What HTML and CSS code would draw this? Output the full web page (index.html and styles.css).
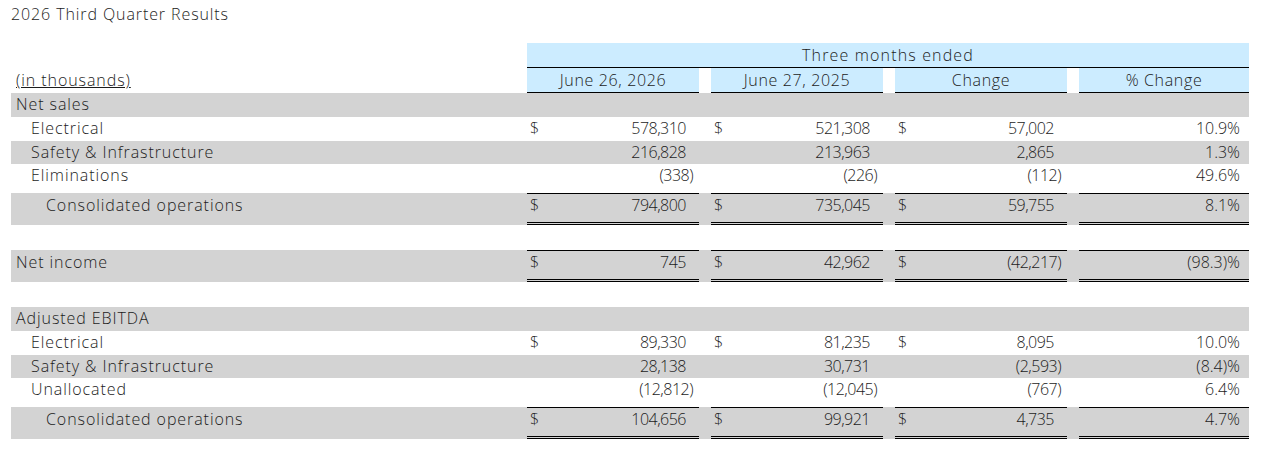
FILE: index.html
```html
<!DOCTYPE html>
<html lang="en">
<head>
<meta charset="utf-8">
<title>2026 Third Quarter Results</title>
<link rel="stylesheet" href="styles.css">
</head>
<body>
<div class="report">
  <h1 class="title">2026 Third Quarter Results</h1>
  <div class="table">
    <div class="row head1">
      <div class="label"></div>
      <div class="span-head">Three months ended</div>
    </div>
    <div class="row head2">
      <div class="label"><span class="units">(in thousands)</span></div>
      <div class="colhead">June 26, 2026</div><div class="gap"></div>
      <div class="colhead">June 27, 2025</div><div class="gap"></div>
      <div class="colhead">Change</div><div class="gap"></div>
      <div class="colhead">% Change</div>
    </div>

    <div class="section">
      <div class="row data shade"><div class="label">Net sales</div></div>
      <div class="row data">
        <div class="label l1">Electrical</div>
        <div class="val"><span>$</span><span class="num">578,310</span></div><div class="gap"></div>
        <div class="val"><span>$</span><span class="num">521,308</span></div><div class="gap"></div>
        <div class="val"><span>$</span><span class="num">57,002</span></div><div class="gap"></div>
        <div class="val pct"><span>10.9%</span></div>
      </div>
      <div class="row data shade">
        <div class="label l1">Safety &amp; Infrastructure</div>
        <div class="val"><span></span><span class="num">216,828</span></div><div class="gap"></div>
        <div class="val"><span></span><span class="num">213,963</span></div><div class="gap"></div>
        <div class="val"><span></span><span class="num">2,865</span></div><div class="gap"></div>
        <div class="val pct"><span>1.3%</span></div>
      </div>
      <div class="row data">
        <div class="label l1">Eliminations</div>
        <div class="val"><span></span><span class="num neg">(338)</span></div><div class="gap"></div>
        <div class="val"><span></span><span class="num neg">(226)</span></div><div class="gap"></div>
        <div class="val"><span></span><span class="num neg">(112)</span></div><div class="gap"></div>
        <div class="val pct"><span>49.6%</span></div>
      </div>
      <div class="row total shade">
        <div class="label l2">Consolidated operations</div>
        <div class="val"><span>$</span><span class="num">794,800</span></div><div class="gap"></div>
        <div class="val"><span>$</span><span class="num">735,045</span></div><div class="gap"></div>
        <div class="val"><span>$</span><span class="num">59,755</span></div><div class="gap"></div>
        <div class="val pct"><span>8.1%</span></div>
      </div>
    </div>

    <div class="section">
      <div class="row total first shade">
        <div class="label">Net income</div>
        <div class="val"><span>$</span><span class="num">745</span></div><div class="gap"></div>
        <div class="val"><span>$</span><span class="num">42,962</span></div><div class="gap"></div>
        <div class="val"><span>$</span><span class="num neg">(42,217)</span></div><div class="gap"></div>
        <div class="val pct"><span>(98.3)%</span></div>
      </div>
    </div>

    <div class="section">
      <div class="row data shade"><div class="label">Adjusted EBITDA</div></div>
      <div class="row data">
        <div class="label l1">Electrical</div>
        <div class="val"><span>$</span><span class="num">89,330</span></div><div class="gap"></div>
        <div class="val"><span>$</span><span class="num">81,235</span></div><div class="gap"></div>
        <div class="val"><span>$</span><span class="num">8,095</span></div><div class="gap"></div>
        <div class="val pct"><span>10.0%</span></div>
      </div>
      <div class="row data shade">
        <div class="label l1">Safety &amp; Infrastructure</div>
        <div class="val"><span></span><span class="num">28,138</span></div><div class="gap"></div>
        <div class="val"><span></span><span class="num">30,731</span></div><div class="gap"></div>
        <div class="val"><span></span><span class="num neg">(2,593)</span></div><div class="gap"></div>
        <div class="val pct"><span>(8.4)%</span></div>
      </div>
      <div class="row data">
        <div class="label l1">Unallocated</div>
        <div class="val"><span></span><span class="num neg">(12,812)</span></div><div class="gap"></div>
        <div class="val"><span></span><span class="num neg">(12,045)</span></div><div class="gap"></div>
        <div class="val"><span></span><span class="num neg">(767)</span></div><div class="gap"></div>
        <div class="val pct"><span>6.4%</span></div>
      </div>
      <div class="row total shade">
        <div class="label l2">Consolidated operations</div>
        <div class="val"><span>$</span><span class="num">104,656</span></div><div class="gap"></div>
        <div class="val"><span>$</span><span class="num">99,921</span></div><div class="gap"></div>
        <div class="val"><span>$</span><span class="num">4,735</span></div><div class="gap"></div>
        <div class="val pct"><span>4.7%</span></div>
      </div>
    </div>
  </div>
</div>
</body>
</html>
```

FILE: styles.css
```css
body {
  margin: 0;
  background: #ffffff;
  color: #1c1c1c;
  font-family: "Open Sans", "Liberation Sans", sans-serif;
  font-size: 16px;
  font-weight: 350;
}

.report {
  padding: 2px 0 0 11px;
}

.title {
  margin: 0 0 17px;
  font-size: 16px;
  font-weight: 350;
  line-height: 24px;
  letter-spacing: 0.9px;
}

.table {
  width: 1238px;
}

.row {
  display: grid;
  grid-template-columns: 516px 172px 12px 172px 12px 172px 12px 170px;
  line-height: 24px;
  white-space: nowrap;
}

.span-head {
  grid-column: 2 / -1;
  background: #ccecff;
  text-align: center;
  border-bottom: 1px solid #000000;
  letter-spacing: 1.15px;
}

.colhead {
  background: #ccecff;
  text-align: center;
  border-bottom: 1px solid #000000;
  letter-spacing: 0.65px;
}

.label {
  padding-left: 5px;
  letter-spacing: 0.92px;
}

.units {
  text-decoration: underline;
}

.l1 {
  padding-left: 20px;
}

.l2 {
  padding-left: 35px;
}

.data {
  height: 23.75px;
  line-height: 22px;
}

.shade {
  background: #d3d3d3;
}

.val {
  display: flex;
  justify-content: space-between;
  padding: 0 6px 0 3px;
}

.num {
  padding-right: 7px;
  letter-spacing: -0.5px;
}

.num.neg {
  padding-right: 0;
}

.val.pct {
  justify-content: flex-end;
  padding-right: 9px;
}

.total {
  margin-top: 5px;
  line-height: 22px;
}

.total.first {
  margin-top: 0;
}

.total .label {
  padding-top: 1px;
}

.total .val {
  border-top: 1px solid #000000;
  border-bottom: 3px double #000000;
  padding-bottom: 6px;
}

.section + .section {
  margin-top: 25px;
}
```
